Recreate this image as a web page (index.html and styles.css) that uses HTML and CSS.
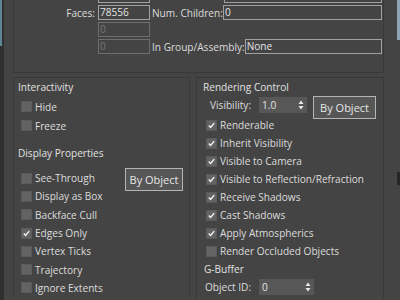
FILE: index.html
```html
<!DOCTYPE html>
<html lang="en">
<head>
    <meta charset="UTF-8">
    <meta name="viewport" content="width=device-width, initial-scale=1.0">
    <title>Object Properties</title>
    <link rel="stylesheet" href="styles.css">
</head>
<body>
    <div class="window">
        <div class="edge-left"></div>

        <div class="sheet">
            <!-- object info -->
            <section class="general">
                <div class="info-row">
                    <span class="info-label"></span>
                    <span class="field"></span>
                    <span class="info-label-right spacer"></span>
                    <span class="field field-wide"></span>
                </div>
                <div class="info-row">
                    <span class="info-label">Faces:</span>
                    <span class="field">78556</span>
                    <span class="info-label-right">Num. Children:</span>
                    <span class="field field-wide">0</span>
                </div>
                <div class="info-row">
                    <span class="info-label"></span>
                    <span class="field field-disabled">0</span>
                </div>
                <div class="info-row">
                    <span class="info-label"></span>
                    <span class="field field-disabled">0</span>
                    <span class="info-label-right">In Group/Assembly:</span>
                    <span class="field field-wide">None</span>
                </div>
            </section>

            <div class="columns">
                <div class="column column-left">
                    <h2 class="group-title">Interactivity</h2>
                    <div class="interactivity">
                        <label class="check"><span class="box"></span>Hide</label>
                        <label class="check"><span class="box"></span>Freeze</label>
                    </div>

                    <h2 class="group-title display-title">Display Properties</h2>
                    <div class="display-props">
                        <div class="check-list">
                            <label class="check"><span class="box"></span>See-Through</label>
                            <label class="check"><span class="box"></span>Display as Box</label>
                            <label class="check"><span class="box"></span>Backface Cull</label>
                            <label class="check"><span class="box checked"><svg viewBox="0 0 11 11"><path d="M2.2 5.6 L4.4 8 L8.8 2.6"/></svg></span>Edges Only</label>
                            <label class="check"><span class="box"></span>Vertex Ticks</label>
                            <label class="check"><span class="box"></span>Trajectory</label>
                            <label class="check"><span class="box"></span>Ignore Extents</label>
                            <label class="check"><span class="box"></span>Show Frozen in Gray</label>
                        </div>
                        <button class="btn">By Object</button>
                    </div>
                </div>

                <div class="column column-right">
                    <h2 class="group-title">Rendering Control</h2>
                    <div class="spin-row visibility-row">
                        <span class="spin-label">Visibility:</span>
                        <span class="spinner">1.0
                            <svg class="arrows" viewBox="0 0 6 10"><path d="M3 0.5 L5.5 4 H0.5 Z M3 9.5 L5.5 6 H0.5 Z"/></svg>
                        </span>
                        <button class="btn">By Object</button>
                    </div>
                    <label class="check"><span class="box checked"><svg viewBox="0 0 11 11"><path d="M2.2 5.6 L4.4 8 L8.8 2.6"/></svg></span>Renderable</label>
                    <label class="check"><span class="box checked"><svg viewBox="0 0 11 11"><path d="M2.2 5.6 L4.4 8 L8.8 2.6"/></svg></span>Inherit Visibility</label>
                    <label class="check"><span class="box checked"><svg viewBox="0 0 11 11"><path d="M2.2 5.6 L4.4 8 L8.8 2.6"/></svg></span>Visible to Camera</label>
                    <label class="check"><span class="box checked"><svg viewBox="0 0 11 11"><path d="M2.2 5.6 L4.4 8 L8.8 2.6"/></svg></span>Visible to Reflection/Refraction</label>
                    <label class="check"><span class="box checked"><svg viewBox="0 0 11 11"><path d="M2.2 5.6 L4.4 8 L8.8 2.6"/></svg></span>Receive Shadows</label>
                    <label class="check"><span class="box checked"><svg viewBox="0 0 11 11"><path d="M2.2 5.6 L4.4 8 L8.8 2.6"/></svg></span>Cast Shadows</label>
                    <label class="check"><span class="box checked"><svg viewBox="0 0 11 11"><path d="M2.2 5.6 L4.4 8 L8.8 2.6"/></svg></span>Apply Atmospherics</label>
                    <label class="check"><span class="box"></span>Render Occluded Objects</label>

                    <h2 class="group-title gbuffer-title">G-Buffer</h2>
                    <div class="spin-row objectid-row">
                        <span class="spin-label">Object ID:</span>
                        <span class="spinner spinner-id">0
                            <svg class="arrows" viewBox="0 0 6 10"><path d="M3 0.5 L5.5 4 H0.5 Z M3 9.5 L5.5 6 H0.5 Z"/></svg>
                        </span>
                    </div>
                </div>
            </div>
        </div>

        <div class="edge-right"></div>
    </div>
</body>
</html>
```

FILE: styles.css
```css
:root {
    --bg: #444444;
    --line: #393939;
    --text: #dcdcdc;
    --field-border: #a0a0a0;
    --muted: #6e6e6e;
    --box: #636363;
}

* {
    margin: 0;
    padding: 0;
    box-sizing: border-box;
}

body {
    font-family: 'Open Sans', 'Liberation Sans', sans-serif;
    font-size: 10.1px;
    color: var(--text);
    background: var(--bg);
    height: 300px;
    overflow: hidden;
}

.window {
    display: flex;
    height: 300px;
    overflow: hidden;
}

.edge-left {
    width: 4px;
    flex-shrink: 0;
    background: linear-gradient(#5d8797, #5d8797) 0 0 / 2px 46px no-repeat, #303030;
}

.edge-right {
    flex: 1;
    background:
        linear-gradient(#8ea3b3, #8ea3b3) right top / 3px 40px no-repeat,
        linear-gradient(#262626, #262626) right 172px / 3px 13px no-repeat,
        var(--bg);
}

.sheet {
    width: 371px;
    margin-left: 9px;
    flex-shrink: 0;
}

/* object info block */
.general {
    margin-top: -20px;
    border: 1px solid var(--line);
    padding: 7px 1px 18px 0;
    display: flex;
    flex-direction: column;
    gap: 2px;
}

.info-row {
    display: flex;
    align-items: center;
    height: 15px;
}

.info-label {
    width: 84px;
    padding-right: 3px;
    text-align: right;
    white-space: nowrap;
}

.info-label-right {
    margin-left: 2px;
    white-space: nowrap;
}

.spacer {
    width: 72px;
}

.field {
    width: 52px;
    height: 15px;
    line-height: 13px;
    border: 1px solid var(--field-border);
    padding-left: 1px;
    color: #e2e2e2;
}

.field-wide {
    flex: 1;
    width: auto;
}

.field-disabled {
    border-color: var(--muted);
    color: #767676;
}

/* two columns */
.columns {
    display: flex;
    gap: 6px;
    margin-top: 4px;
}

.column {
    border: 1px solid var(--line);
    border-bottom: none;
    height: 222px;
    overflow: hidden;
}

.column-left {
    width: 177px;
    padding-left: 4px;
}

.column-right {
    width: 188px;
    padding-left: 6px;
}

.group-title {
    font-size: inherit;
    font-weight: 400;
    height: 18px;
    line-height: 18px;
    color: #e0e0e0;
}

.check {
    display: flex;
    align-items: center;
    height: 18px;
    white-space: nowrap;
    padding-left: 3px;
}

.box {
    width: 11px;
    height: 11px;
    background: var(--box);
    border: 1px solid #5a5a5a;
    margin-right: 3px;
    flex-shrink: 0;
    display: flex;
}

.box svg {
    width: 9px;
    height: 9px;
    fill: none;
    stroke: #f4f4f4;
    stroke-width: 1.7;
}

.interactivity {
    margin-top: 1px;
}

.interactivity .check {
    height: 19px;
}

.display-title {
    margin-top: 9px;
}

.display-props {
    display: flex;
    align-items: flex-start;
    margin-top: 7px;
}

.check-list {
    flex: 1;
    min-width: 0;
}

.check-list .check {
    height: 18.3px;
}

.btn {
    font-family: inherit;
    font-size: 11px;
    color: #e6e6e6;
    background: #565656;
    border: 1px solid #b4b4b4;
    height: 23px;
    padding: 0;
    white-space: nowrap;
    flex-shrink: 0;
    cursor: pointer;
}

.display-props .btn {
    width: 58px;
    margin-right: 6px;
    margin-top: -1px;
}

.spin-row {
    display: flex;
    align-items: flex-start;
}

.visibility-row {
    height: 20px;
    padding-left: 7px;
}

.spin-label {
    height: 16px;
    line-height: 16px;
    margin-top: 1px;
    white-space: nowrap;
}

.spinner {
    position: relative;
    height: 16px;
    line-height: 16px;
    margin-top: 1px;
    background: #575757;
    padding-left: 3px;
    color: #e4e4e4;
}

.visibility-row .spinner {
    width: 48px;
    margin-left: 8px;
}

.visibility-row .btn {
    width: 63px;
    margin-left: 6px;
}

.arrows {
    position: absolute;
    right: 3px;
    top: 3px;
    width: 6px;
    height: 10px;
    fill: #e8e8e8;
}

.gbuffer-title {
    padding-left: 1px;
}

.objectid-row {
    height: 18px;
    padding-left: 2px;
}

.spinner-id {
    width: 55px;
    margin-left: 8px;
}
```
